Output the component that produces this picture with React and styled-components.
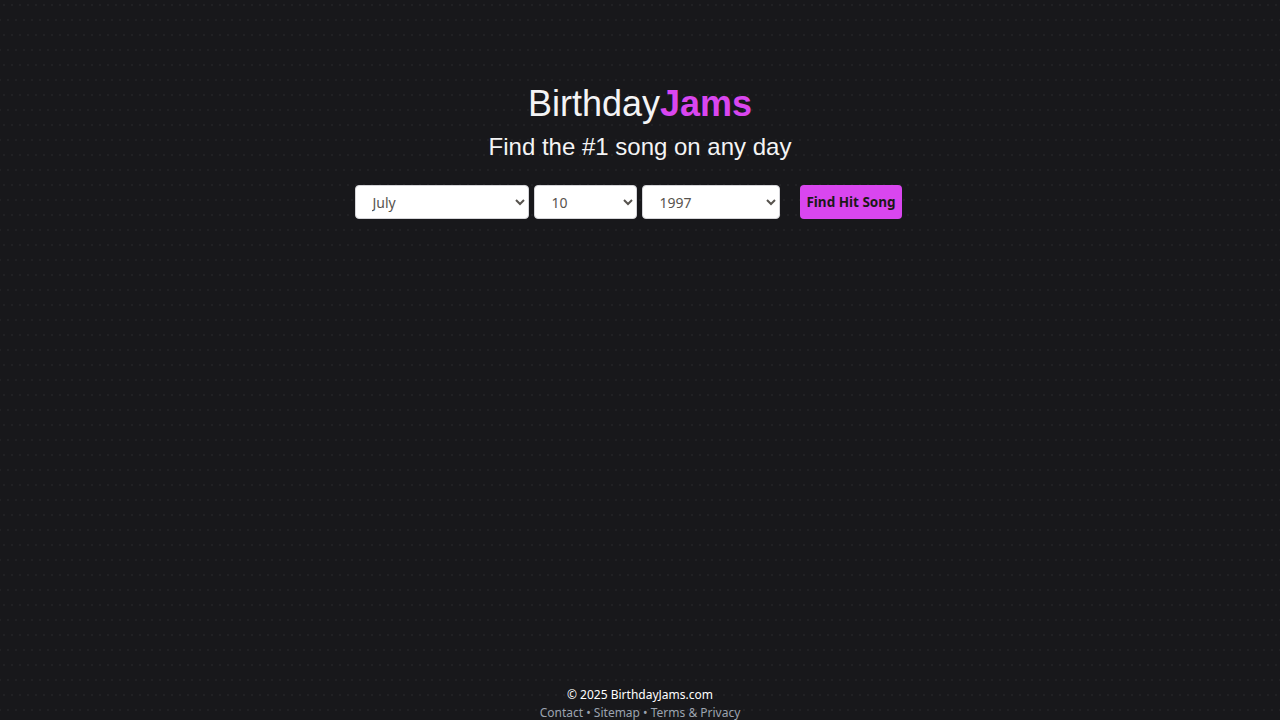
import React, { useState } from "react";
import styled, { createGlobalStyle } from "styled-components";

const GlobalStyle = createGlobalStyle`
  html, body {
    margin: 0;
    padding: 0;
    height: 100%;
  }
  body {
    background-color: #18181b;
    background-image:
      radial-gradient(circle, rgba(255, 255, 255, 0.04) 0.8px, transparent 1px),
      radial-gradient(circle, rgba(255, 255, 255, 0.04) 0.8px, transparent 1px);
    background-size: 8px 30px, 8px 30px;
    background-position: 0 -10px, 4px 5px;
    color: #f4f4f5;
    font-family: "Liberation Sans", Arial, sans-serif;
  }
  #root {
    min-height: 100vh;
  }
`;

const Page = styled.div`
  min-height: 100vh;
  display: flex;
  flex-direction: column;
  align-items: center;
`;

const Main = styled.main`
  flex: 1;
  display: flex;
  flex-direction: column;
  align-items: center;
  padding-top: 84px;
`;

const Title = styled.h1`
  margin: 0;
  font-size: 36px;
  font-weight: 400;
  line-height: 40px;
  color: #f4f4f5;

  span {
    color: #d946ef;
    font-weight: 700;
  }
`;

const Subtitle = styled.h2`
  margin: 7px 0 0;
  font-size: 24px;
  font-weight: 400;
  line-height: 32px;
  color: #f4f4f5;
`;

const Form = styled.form`
  display: flex;
  align-items: center;
  gap: 5px;
  margin-top: 22px;
  padding-left: 2px;
  padding-right: 25px;
`;

const Select = styled.select`
  width: ${({ w }) => w}px;
  height: 34px;
  box-sizing: border-box;
  padding: 0 6px 0 12px;
  border: 1px solid #d4d4d8;
  border-radius: 4px;
  background: #fff;
  color: #57534e;
  font-family: "Noto Sans", "Open Sans", sans-serif;
  font-size: 14px;
`;

const Button = styled.button`
  margin-left: 15px;
  height: 34px;
  padding: 0 6px;
  border: none;
  border-radius: 4px;
  background: #d946ef;
  color: #1c1917;
  font-family: "Noto Sans", "Open Sans", sans-serif;
  font-size: 13.5px;
  font-weight: 700;
  cursor: pointer;
`;

const Footer = styled.footer`
  text-align: center;
  font-family: "Noto Sans", "Open Sans", sans-serif;
  font-size: 12px;
  line-height: 18px;
  margin-bottom: -2px;
`;

const Copy = styled.div`
  color: #ffffff;
`;

const Links = styled.div`
  color: #9ca3af;

  a {
    color: #9ca3af;
    text-decoration: none;
  }
`;

const months = [
  "January", "February", "March", "April", "May", "June",
  "July", "August", "September", "October", "November", "December",
];

const App = () => {
  const [month, setMonth] = useState("July");
  const [day, setDay] = useState("10");
  const [year, setYear] = useState("1997");

  const days = Array.from({ length: 31 }, (_, i) => String(i + 1));
  const years = Array.from({ length: 2025 - 1958 + 1 }, (_, i) => String(2025 - i));

  return (
    <>
      <GlobalStyle />
      <Page>
        <Main>
          <Title>Birthday<span>Jams</span></Title>
          <Subtitle>Find the #1 song on any day</Subtitle>
          <Form onSubmit={(e) => e.preventDefault()}>
            <Select w={174} value={month} onChange={(e) => setMonth(e.target.value)}>
              {months.map((m) => <option key={m}>{m}</option>)}
            </Select>
            <Select w={103} value={day} onChange={(e) => setDay(e.target.value)}>
              {days.map((d) => <option key={d}>{d}</option>)}
            </Select>
            <Select w={138} value={year} onChange={(e) => setYear(e.target.value)}>
              {years.map((y) => <option key={y}>{y}</option>)}
            </Select>
            <Button type="submit">Find Hit Song</Button>
          </Form>
        </Main>
        <Footer>
          <Copy>© 2025 BirthdayJams.com</Copy>
          <Links>
            <a href="#">Contact</a> • <a href="#">Sitemap</a> • <a href="#">Terms &amp; Privacy</a>
          </Links>
        </Footer>
      </Page>
    </>
  );
};

export default App;
